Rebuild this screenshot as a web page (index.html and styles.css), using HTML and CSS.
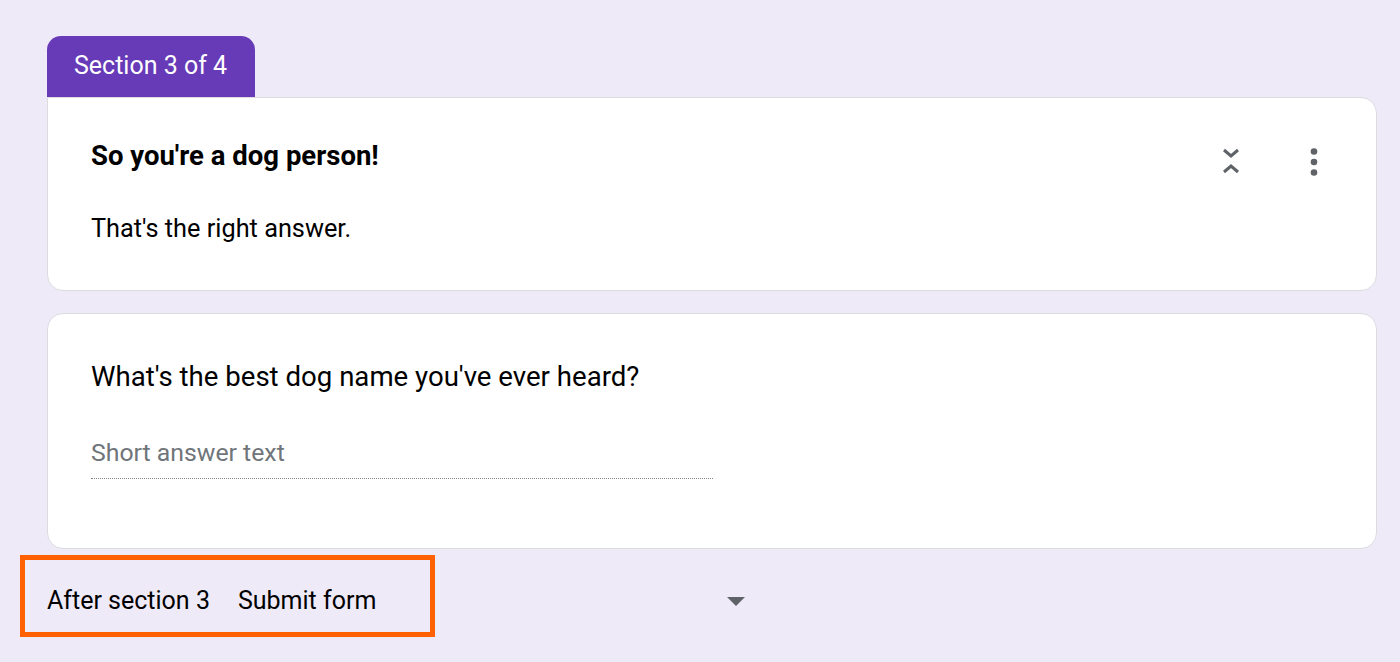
FILE: index.html
```html
<!DOCTYPE html>
<html>
<head>
<meta charset="utf-8">
<link rel="stylesheet" href="styles.css">
</head>
<body>
<div class="page">
  <div class="tab">Section 3 of 4</div>
  <div class="card card-first">
    <div class="head">
      <div class="title">So you're a dog person!</div>
      <div class="icons">
        <svg class="collapse" width="20" height="30" viewBox="0 0 20 30">
          <path d="M3 2 L10 8 L17 2" fill="none" stroke="#5f6368" stroke-width="3"/>
          <path d="M3 24 L10 18 L17 24" fill="none" stroke="#5f6368" stroke-width="3"/>
        </svg>
        <svg class="kebab" width="10" height="30" viewBox="0 0 10 30">
          <circle cx="5" cy="3.5" r="3.3" fill="#5f6368"/>
          <circle cx="5" cy="14" r="3.3" fill="#5f6368"/>
          <circle cx="5" cy="24.5" r="3.3" fill="#5f6368"/>
        </svg>
      </div>
    </div>
    <div class="desc">That's the right answer.</div>
  </div>
  <div class="card card-second">
    <div class="question">What's the best dog name you've ever heard?</div>
    <div class="answer">Short answer text</div>
  </div>
  <div class="after">
    <div class="highlight">
      <span class="after-label">After section 3</span>
      <span class="after-value">Submit form</span>
    </div>
    <svg class="caret" width="20" height="10" viewBox="0 0 20 10"><path d="M1 1 L19 1 L10 10 Z" fill="#5f6368"/></svg>
  </div>
</div>
</body>
</html>
```
FILE: styles.css
```css
html, body {
  margin: 0;
  padding: 0;
  background: #efeaf8;
  font-family: Roboto, "Liberation Sans", Arial, sans-serif;
  color: #202124;
}
.page {
  width: 1400px;
  height: 662px;
  padding: 36px 23px 0 47px;
  box-sizing: border-box;
}
.tab {
  width: 208px;
  height: 61px;
  box-sizing: border-box;
  background: #673ab7;
  color: #fff;
  border-radius: 14px 14px 0 0;
  font-size: 25px;
  padding-left: 27px;
  line-height: 60px;
}
.card {
  background: #fff;
  border: 1.5px solid #dadce0;
  border-radius: 0 16px 16px 16px;
  box-sizing: border-box;
}
.card-first {
  height: 194px;
  padding: 40px 43px 0 43px;
}
.head {
  display: flex;
  justify-content: space-between;
  align-items: flex-start;
}
.title {
  font-weight: 700;
  font-size: 27.5px;
  color: #000;
  line-height: 36px;
}
.icons {
  display: flex;
  gap: 68px;
  padding-top: 10px;
  padding-right: 14px;
}
.desc {
  font-size: 25.3px;
  margin-top: 36px;
  line-height: 30px;
  color: #000;
}
.card-second {
  margin-top: 22px;
  height: 236px;
  border-radius: 16px;
  padding: 46px 43px 0 43px;
}
.question {
  font-size: 27.6px;
  color: #000;
  line-height: 34px;
}
.answer {
  margin-top: 44px;
  width: 622px;
  font-size: 24.8px;
  color: #70757a;
  line-height: 30px;
  padding-bottom: 10px;
  border-bottom: 1.5px dotted #80868b;
}
.after {
  display: flex;
  align-items: center;
  margin-top: 6px;
  margin-left: -27px;
}
.highlight {
  width: 415px;
  height: 82px;
  box-sizing: border-box;
  border: 5px solid #ff6100;
  display: flex;
  align-items: center;
  padding-left: 22px;
  padding-top: 8px;
  font-size: 25px;
  color: #000;
}
.after-label { margin-right: 28px; }
.caret {
  margin-left: 291px;
  margin-top: 10px;
}
```
